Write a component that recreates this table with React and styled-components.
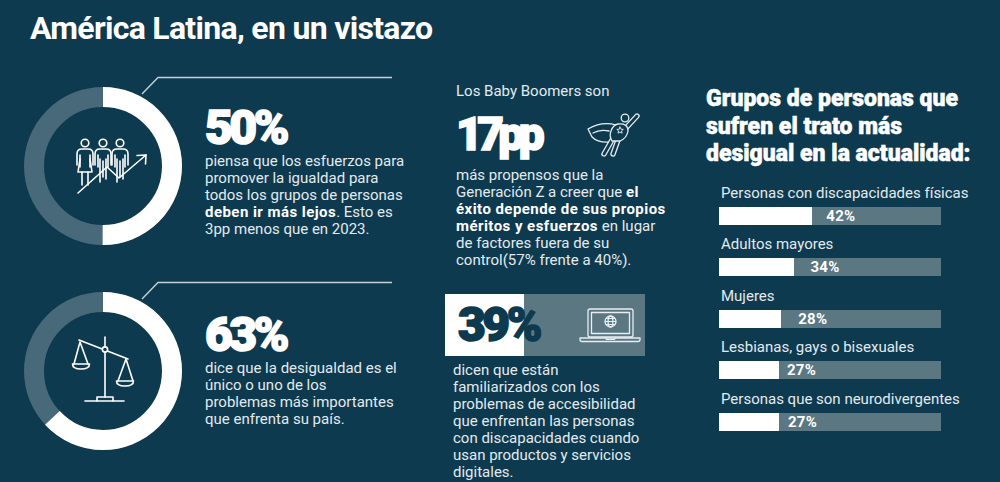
import React from 'react';
import styled, { createGlobalStyle } from 'styled-components';

const BG = '#0e3a4f';

const GlobalStyle = createGlobalStyle`
  html, body { margin: 0; padding: 0; background: ${BG}; }
  body { font-family: Roboto, "Noto Sans", sans-serif; }
`;

const Page = styled.div`
  width: 1000px;
  height: 482px;
  overflow: hidden;
  background: ${BG};
  color: #e3eaee;
  font-family: Roboto, "Noto Sans", sans-serif;
`;

const Title = styled.h1`
  margin: 0;
  padding: 12px 0 0 30px;
  font-size: 32px;
  line-height: 32px;
  font-weight: 700;
  color: #fff;
  letter-spacing: -0.7px;
`;

const Columns = styled.div`
  display: flex;
  align-items: flex-start;
  margin-top: 33px;
`;

const LeftCol = styled.div`
  flex: none;
  width: 445px;
  padding-left: 24px;
  box-sizing: border-box;
  display: flex;
  flex-direction: column;
  gap: 37px;
`;

const StatRow = styled.div`
  position: relative;
  display: flex;
  align-items: flex-start;
  padding-top: 10px;
`;

const Connector = styled.svg`
  position: absolute;
  top: -1px;
  left: 117px;
  width: 260px;
  height: 22px;
  overflow: visible;
`;

const RingSvg = styled.svg`
  flex: none;
  width: 158px;
  height: 158px;
  display: block;
`;

const StatText = styled.div`
  margin-left: 23px;
  padding-top: ${(p) => p.$top}px;
`;

const BigNumber = styled.div`
  font-size: ${(p) => p.$size || 48}px;
  line-height: 1;
  font-weight: 900;
  letter-spacing: ${(p) => p.$ls ?? -3.5}px;
  color: ${(p) => (p.$dark ? BG : '#fff')};
  -webkit-text-stroke: 1.6px ${(p) => (p.$dark ? BG : '#fff')};
`;

const Body = styled.p`
  margin: ${(p) => p.$mt || 0}px 0 0 ${(p) => p.$ml || 0}px;
  font-size: 15px;
  line-height: 17px;
  color: #e3eaee;
  white-space: nowrap;
  b { font-weight: 700; color: #fff; letter-spacing: 0.45px; }
`;

const MidCol = styled.div`
  flex: none;
  width: 261px;
  padding-top: 6px;
  box-sizing: border-box;
`;

const MidTop = styled.div`
  padding-left: 11px;
  width: 194px;
`;

const NumberRow = styled.div`
  display: flex;
  justify-content: space-between;
  align-items: center;
  margin-top: 11px;
  height: 46px;
`;

const HeroSvg = styled.svg`
  width: 70px;
  height: 52px;
  display: block;
  margin-top: -4px;
`;

const StatBox = styled.div`
  margin-top: 25px;
  width: 200px;
  height: 62px;
  display: flex;
  align-items: center;
  justify-content: space-between;
  padding: 0 5px 0 13px;
  box-sizing: border-box;
  background: linear-gradient(to right, #fff 79px, #5a7782 79px);
`;

const LaptopSvg = styled.svg`
  width: 80px;
  height: 50px;
  display: block;
  overflow: visible;
`;

const RightCol = styled.div`
  flex: none;
  padding-top: 8px;
  width: 290px;
`;

const Heading = styled.h2`
  margin: 0;
  font-size: 23px;
  line-height: 27.5px;
  font-weight: 900;
  color: #fff;
  letter-spacing: 0px;
  -webkit-text-stroke: 0.5px #fff;
`;

const BarList = styled.ul`
  list-style: none;
  margin: 17px 0 0;
  padding: 0 0 0 13px;
  display: flex;
  flex-direction: column;
  gap: 11.5px;
`;

const BarItem = styled.li`
  display: flex;
  flex-direction: column;
`;

const BarLabel = styled.span`
  font-size: 15px;
  line-height: 17px;
  color: #e3eaee;
  padding-left: 2px;
`;

const Bar = styled.div`
  margin-top: 5px;
  width: 222px;
  height: 18px;
  background: #5a7782;
  display: flex;
  align-items: center;
`;

const BarFill = styled.div`
  height: 100%;
  background: #fff;
`;

const BarValue = styled.span`
  font-size: 15px;
  font-weight: 700;
  color: #fff;
  line-height: 18px;
  letter-spacing: 0.3px;
`;

function Ring({ pct, children }) {
  const r = 69;
  const c = 2 * Math.PI * r;
  return (
    <RingSvg viewBox="0 0 158 158">
      <circle cx="79" cy="79" r={r} fill="none" stroke="#48697a" strokeWidth="20" />
      <circle
        cx="79" cy="79" r={r} fill="none" stroke="#fff" strokeWidth="20"
        strokeDasharray={`${(pct / 100) * c} ${c}`}
        transform="rotate(-90 79 79)"
      />
      <g fill="none" stroke="#fff" strokeWidth="1.6" strokeLinecap="round" strokeLinejoin="round">
        {children}
      </g>
    </RingSvg>
  );
}

function PeopleIcon() {
  const fig = (x, woman) => (
    <g key={x}>
      <circle cx={x} cy="56" r="3.8" />
      <path d={`M${x - 8},78 V67 Q${x - 8},62 ${x - 3},62 H${x + 3} Q${x + 8},62 ${x + 8},67 V78`} />
      <path d={`M${x - 5},68 V80 M${x + 5},68 V80`} />
      {woman ? (
        <>
          <path d={`M${x - 5},72 L${x - 7},85 H${x + 7} L${x + 5},72`} />
          <path d={`M${x - 3},85 V98 M${x + 3},85 V98`} />
        </>
      ) : (
        <path d={`M${x - 3},72 V95 M${x + 3},72 V92 M${x},74 V90`} />
      )}
    </g>
  );
  return (
    <>
      {fig(61, true)}
      {fig(79, false)}
      {fig(96, false)}
      <path d="M54,106 L83,80 L95,91 L122,68" />
      <path d="M113,68.5 L122,68 L121.5,77" />
    </>
  );
}

function ScaleIcon() {
  return (
    <>
      <path d="M55,48 L104,67" />
      <path d="M81,45 V105" />
      <circle cx="81" cy="57.5" r="2.6" fill={BG} />
      <path d="M56,50 L50,72 M56,50 L64,72" />
      <path d="M48.5,72 H65.5 Q65.5,77 57,77 Q48.5,77 48.5,72 Z" />
      <path d="M102,67 L94,89 M102,67 L109,89" />
      <path d="M92.5,89 H109.5 Q109.5,94 101,94 Q92.5,94 92.5,89 Z" />
      <path d="M73,109 V105 H89 V109" />
      <path d="M61,109 H100" />
    </>
  );
}

function HeroIcon() {
  const limb = (d) => (
    <>
      <path d={d} stroke="#e8eef1" strokeWidth="5.4" strokeLinecap="round" fill="none" />
      <path d={d} stroke={BG} strokeWidth="2.8" strokeLinecap="round" fill="none" />
    </>
  );
  return (
    <HeroSvg viewBox="0 0 70 52">
      <g fill="none" stroke="#e8eef1" strokeWidth="1.3" strokeLinejoin="round" strokeLinecap="round">
        <path d="M36,19 Q22,15 8,23 L12,31 Q18,37 30,36" />
        <path d="M13,27 Q20,23 29,25" />
        {limb('M32,34 L24,48')}
        {limb('M38,34 L33,48')}
        {limb('M46,22 L57,10')}
        <path d="M38,18 Q48,17 48,25 Q47,32 40,35 L32,35 Q29,30 31,25 Q33,19 38,18 Z" fill={BG} />
        <path d="M40,21 l1,2.2 2.3,0.2 -1.8,1.5 0.6,2.3 -2.1,-1.2 -2,1.2 0.6,-2.3 -1.8,-1.5 2.3,-0.2 Z" strokeWidth="0.9" />
        <circle cx="45" cy="12" r="3.8" fill={BG} />
      </g>
    </HeroSvg>
  );
}

function LaptopIcon() {
  return (
    <LaptopSvg viewBox="0 0 80 50">
      <g fill="none" stroke="#e8eef1" strokeWidth="1.3" strokeLinejoin="round">
        <rect x="28" y="9" width="45" height="28" rx="2" />
        <rect x="31.5" y="12.5" width="38" height="21" />
        <circle cx="50.5" cy="21.5" r="5.5" />
        <ellipse cx="50.5" cy="21.5" rx="2.4" ry="5.5" />
        <path d="M45,21.5 H56 M46,18.5 H55 M46,24.5 H55" strokeWidth="1" />
        <path d="M20,38 H80 V39.5 Q80,41.5 78,41.5 H22 Q20,41.5 20,39.5 Z" />
        <path d="M46,38 V39.5 H55 V38" strokeWidth="1" />
      </g>
    </LaptopSvg>
  );
}

function Stat({ pct, number, numTop, icon, children }) {
  return (
    <StatRow>
      <Connector viewBox="0 0 260 22">
        <polyline points="1,18 17,1.5 251,1.5" fill="none" stroke="#c5d0d6" strokeWidth="1.4" />
      </Connector>
      <Ring pct={pct}>{icon}</Ring>
      <StatText $top={numTop}>
        <BigNumber>{number}</BigNumber>
        <Body $mt={1}>{children}</Body>
      </StatText>
    </StatRow>
  );
}

const bars = [
  { label: 'Personas con discapacidades físicas', pct: 42, gap: 14 },
  { label: 'Adultos mayores', pct: 34, gap: 16 },
  { label: 'Mujeres', pct: 28, gap: 17 },
  { label: 'Lesbianas, gays o bisexuales', pct: 27, gap: 8 },
  { label: 'Personas que son neurodivergentes', pct: 27, gap: 9 },
];

export default function App() {
  return (
    <>
      <GlobalStyle />
      <Page>
        <Title>América Latina, en un vistazo</Title>
        <Columns>
          <LeftCol>
            <Stat pct={50} number="50%" numTop={17} icon={<PeopleIcon />}>
              piensa que los esfuerzos para<br />
              promover la igualdad para<br />
              todos los grupos de personas<br />
              <b>deben ir más lejos</b>. Esto es<br />
              3pp menos que en 2023.
            </Stat>
            <Stat pct={63} number="63%" numTop={19} icon={<ScaleIcon />}>
              dice que la desigualdad es el<br />
              único o uno de los<br />
              problemas más importantes<br />
              que enfrenta su país.
            </Stat>
          </LeftCol>

          <MidCol>
            <MidTop>
              <Body>Los Baby Boomers son</Body>
              <NumberRow>
                <BigNumber $size={46} $ls={-5.5}>17pp</BigNumber>
                <HeroIcon />
              </NumberRow>
              <Body $mt={10}>
                más propensos que la<br />
                Generación Z a creer que <b>el<br />
                éxito depende de sus propios<br />
                méritos y esfuerzos</b> en lugar<br />
                de factores fuera de su<br />
                control(57% frente a 40%).
              </Body>
            </MidTop>
            <StatBox>
              <BigNumber $dark>39%</BigNumber>
              <LaptopIcon />
            </StatBox>
            <Body $mt={6} $ml={8}>
              dicen que están<br />
              familiarizados con los<br />
              problemas de accesibilidad<br />
              que enfrentan las personas<br />
              con discapacidades cuando<br />
              usan productos y servicios<br />
              digitales.
            </Body>
          </MidCol>

          <RightCol>
            <Heading>
              Grupos de personas que<br />
              sufren el trato más<br />
              desigual en la actualidad:
            </Heading>
            <BarList>
              {bars.map((b) => (
                <BarItem key={b.label}>
                  <BarLabel>{b.label}</BarLabel>
                  <Bar>
                    <BarFill style={{ width: `${b.pct}%` }} />
                    <BarValue style={{ marginLeft: b.gap }}>{b.pct}%</BarValue>
                  </Bar>
                </BarItem>
              ))}
            </BarList>
          </RightCol>
        </Columns>
      </Page>
    </>
  );
}
